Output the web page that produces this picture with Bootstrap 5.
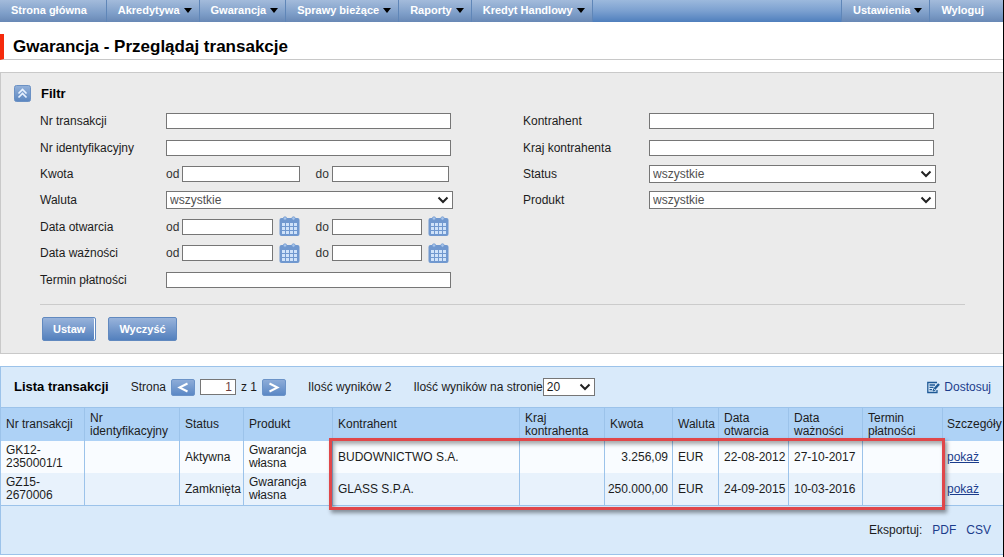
<!DOCTYPE html>
<html lang="pl">
<head>
<meta charset="utf-8">
<meta name="viewport" content="width=device-width, initial-scale=1">
<title>Gwarancja - Przeglądaj transakcje</title>
<link href="https://cdn.jsdelivr.net/npm/bootstrap@5.3.0/dist/css/bootstrap.min.css" rel="stylesheet">
<style>
body{font-family:"Liberation Sans",Arial,sans-serif;font-size:12px;line-height:14px;color:#1c1c1c;background:#fff;border-right:1px solid #000;min-height:100vh}
a{color:#1b3c8c;text-decoration:none}
input,select,button{font:inherit}
.topbar{height:22px;background:linear-gradient(#9cb9dd,#7ba0d0 50%,#4f7fbd);font-size:11px;font-weight:700}
.topbar .nav-link{height:22px;padding:0 7px 2px 11px;gap:4px;color:#fff;background:linear-gradient(#a3bbdb,#7f9fc9 60%,#6888b5);border-right:1px solid #5f86b8;white-space:nowrap}
.topbar .plain{padding-right:19px}
.topbar .first-right{border-left:1px solid #5f86b8}
.tri{width:8px;border:4px solid transparent;border-top:5px solid #000;border-bottom:0}
.page-title{margin-top:12px;height:26px;border-bottom:1px solid #c8c8c8;border-left:4px solid #f52a0c;padding-left:9px}
h1{font-size:17px;line-height:20px;font-weight:700;color:#000}
h2{font-size:13px;line-height:16px;font-weight:700;color:#000}
.filter-panel{margin-top:12px;background:#ebebeb;border:1px solid #c9c9c9;border-right:0;padding:12px 38px 12px 39px}
.filter-head{margin-left:-26px;gap:10px;height:17px}
.square{width:17px;height:17px;padding:0;border:0;background:none;display:flex}
.fields{margin-top:6px;padding-right:29px;column-gap:70px}
.form-side{flex:1 1 0;display:grid;grid-template-columns:126px minmax(0,1fr);grid-template-rows:repeat(7,1fr);min-height:185px;align-items:center}
.box{width:100%;height:16px;border:1px solid #767676;border-radius:0;padding:0 3px;background:#fff;min-width:0}
.pad-end{padding-right:2px}
.pair{padding-right:4px;gap:16px}
.half{flex:1 1 0;min-width:0}
.half label{flex:0 0 16px;color:#333}
.cal{flex:0 0 21px;margin-left:6px;padding:0;border:0;background:none;height:21px;display:flex}
.pick{width:100%;height:18px;border:1px solid #767676;border-radius:0;color:#505050;padding:0 18px 0 3px;line-height:14px;appearance:none;background:#fff url("data:image/svg+xml,%3Csvg xmlns='http://www.w3.org/2000/svg' width='12' height='8'%3E%3Cpath d='M1.500 1.500 6 6l4.500-4.500' fill='none' stroke='%23222' stroke-width='2'/%3E%3C/svg%3E") no-repeat right 3px center}
.rule{height:1px;margin-top:11px;background:#cbcbcb}
.actions{margin-top:12px;padding-left:2px;gap:12px}
.act{height:24px;padding:0 10px;border:1px solid #6189bf;border-radius:2px;background:linear-gradient(#98b3db,#5380bd);color:#fff;font-size:11px;font-weight:700}
.act.main-act{box-shadow:inset -1px 0 #fff}
.list-panel{margin-top:12px;background:#d9eafa;border:1px solid #9cc3ea;border-right:0}
.toolbar{height:40px;padding:0 12px 0 13px;gap:22px}
.pager{gap:5px}
.pg{width:24px;height:17px;padding:0;border:1px solid #6b93c8;border-radius:2px;background:linear-gradient(#8dacd8,#5b88c5);display:flex;align-items:center;justify-content:center}
.page-no{width:36px;height:16px;border:1px solid #767676;padding:0 3px;text-align:right;color:#6b3f3f}
.per-page{width:52px;color:#1c1c1c}
.list-table{table-layout:fixed;width:100%;margin:0;line-height:13px;color:#1c1c1c;border-collapse:separate;border-spacing:0}
.list-table th,.list-table td{padding:0 4px 0 5px;border-right:1px solid #9cc3ea;vertical-align:middle;font-weight:400}
.list-table td.amount{padding-left:0;text-align:right;white-space:nowrap}
.list-table th:last-child,.list-table td:last-child{border-right:0;padding:0 0 0 4px}
.list-table th{height:34px;background:#aed2f6;border-top:1px solid #9cc3ea}
.list-table td{height:32px;background:#f9fcff}
.list-table tbody tr+tr td{background:#e8f2fc;border-bottom:1px solid #9cc3ea;height:33px}
.list-table td a{text-decoration:underline}
.marker{position:absolute;left:328px;right:58px;top:31px;bottom:-4px;border:3px solid #e0474a;box-shadow:2px 3px 4px rgba(0,0,0,.4),inset 2px 3px 4px rgba(0,0,0,.35);pointer-events:none}
.exports{height:48px;padding:0 12px;gap:10px}
</style>
</head>
<body>
<svg class="d-none" xmlns="http://www.w3.org/2000/svg">
  <symbol id="calendar" viewBox="0 0 21 21">
    <rect x="0.500" y="2" width="20" height="18" rx="2" fill="#7098cf"/>
    <circle cx="6" cy="2.500" r="1.700" fill="#a9c6ec" stroke="#6f97ce" stroke-width=".8"/>
    <circle cx="14.500" cy="2.500" r="1.700" fill="#a9c6ec" stroke="#6f97ce" stroke-width=".8"/>
    <path d="M3 7h3v3H3zM7 7h3v3H7zM11 7h3v3h-3zM15 7h3v3h-3zM3 11h3v3H3zM7 11h3v3H7zM11 11h3v3h-3zM15 11h3v3h-3zM3 15h3v3H3zM7 15h3v3H7zM11 15h3v3h-3zM15 15h3v3h-3z" fill="#cfe2f9"/>
  </symbol>
</svg>

<nav class="topbar d-flex justify-content-between">
  <div class="d-flex">
    <a class="nav-link plain d-flex align-items-center" href="#">Strona główna</a>
    <a class="nav-link d-flex align-items-center" href="#">Akredytywa <span class="tri"></span></a>
    <a class="nav-link d-flex align-items-center" href="#">Gwarancja <span class="tri"></span></a>
    <a class="nav-link d-flex align-items-center" href="#">Sprawy bieżące <span class="tri"></span></a>
    <a class="nav-link d-flex align-items-center" href="#">Raporty <span class="tri"></span></a>
    <a class="nav-link d-flex align-items-center" href="#">Kredyt Handlowy <span class="tri"></span></a>
  </div>
  <div class="d-flex">
    <a class="nav-link first-right d-flex align-items-center" href="#">Ustawienia <span class="tri"></span></a>
    <a class="nav-link plain border-end-0 d-flex align-items-center" href="#">Wyloguj</a>
  </div>
</nav>

<header class="page-title d-flex align-items-center"><h1 class="m-0">Gwarancja - Przeglądaj transakcje</h1></header>

<main>
<form class="filter-panel">
  <div class="filter-head d-flex align-items-center">
    <button type="button" class="square" aria-label="Zwiń filtr"><svg width="17" height="17" viewBox="0 0 17 17"><defs><linearGradient id="sq" x2="0" y2="1"><stop stop-color="#94b2da"/><stop offset="1" stop-color="#5b86c0"/></linearGradient></defs><rect x=".5" y=".5" width="16" height="16" rx="2" fill="url(#sq)" stroke="#6b91c4"/><path d="M4.500 8.500l4-4 4 4M4.500 12.500l4-4 4 4" fill="none" stroke="#e8f2ff" stroke-width="1.700"/></svg></button>
    <h2 class="m-0">Filtr</h2>
  </div>
  <div class="fields d-flex">
    <div class="form-side">
      <label for="nr">Nr transakcji</label><div class="pad-end d-flex"><input id="nr" class="box" type="text"></div>
      <label for="ident">Nr identyfikacyjny</label><div class="pad-end d-flex"><input id="ident" class="box" type="text"></div>
      <span>Kwota</span>
      <div class="pair d-flex">
        <div class="half d-flex align-items-center"><label for="k1">od</label><input id="k1" class="box" type="text"></div>
        <div class="half d-flex align-items-center"><label for="k2">do</label><input id="k2" class="box" type="text"></div>
      </div>
      <label for="wal">Waluta</label><select id="wal" class="pick"><option>wszystkie</option></select>
      <span>Data otwarcia</span>
      <div class="pair d-flex">
        <div class="half d-flex align-items-center"><label for="o1">od</label><input id="o1" class="box" type="text"><button type="button" class="cal" aria-label="Kalendarz"><svg width="21" height="21"><use href="#calendar"/></svg></button></div>
        <div class="half d-flex align-items-center"><label for="o2">do</label><input id="o2" class="box" type="text"><button type="button" class="cal" aria-label="Kalendarz"><svg width="21" height="21"><use href="#calendar"/></svg></button></div>
      </div>
      <span>Data ważności</span>
      <div class="pair d-flex">
        <div class="half d-flex align-items-center"><label for="w1">od</label><input id="w1" class="box" type="text"><button type="button" class="cal" aria-label="Kalendarz"><svg width="21" height="21"><use href="#calendar"/></svg></button></div>
        <div class="half d-flex align-items-center"><label for="w2">do</label><input id="w2" class="box" type="text"><button type="button" class="cal" aria-label="Kalendarz"><svg width="21" height="21"><use href="#calendar"/></svg></button></div>
      </div>
      <label for="term">Termin płatności</label><div class="pad-end d-flex"><input id="term" class="box" type="text"></div>
    </div>
    <div class="form-side">
      <label for="kon">Kontrahent</label><div class="pad-end d-flex"><input id="kon" class="box" type="text"></div>
      <label for="kraj">Kraj kontrahenta</label><div class="pad-end d-flex"><input id="kraj" class="box" type="text"></div>
      <label for="stat">Status</label><select id="stat" class="pick"><option>wszystkie</option></select>
      <label for="prod">Produkt</label><select id="prod" class="pick"><option>wszystkie</option></select>
    </div>
  </div>
  <div class="rule"></div>
  <div class="actions d-flex">
    <button type="button" class="act main-act">Ustaw</button>
    <button type="button" class="act">Wyczyść</button>
  </div>
</form>

<section class="list-panel">
  <div class="toolbar d-flex align-items-center">
    <h2 class="m-0">Lista transakcji</h2>
    <div class="pager d-flex align-items-center">
      <label for="pageno">Strona</label>
      <button type="button" class="pg" aria-label="Poprzednia"><svg width="12" height="11"><path d="M10.500 1.500L2.500 5.500l8 4" fill="none" stroke="#fff" stroke-width="2"/></svg></button>
      <input id="pageno" class="page-no" type="text" value="1">
      <span>z 1</span>
      <button type="button" class="pg" aria-label="Następna"><svg width="12" height="11"><path d="M1.500 1.500l8 4-8 4" fill="none" stroke="#fff" stroke-width="2"/></svg></button>
    </div>
    <span>Ilość wyników 2</span>
    <div class="d-flex align-items-center">
      <label for="per">Ilość wyników na stronie</label>
      <select id="per" class="pick per-page"><option>20</option></select>
    </div>
    <a href="#" class="ms-auto d-flex align-items-center gap-1"><svg width="13" height="13" viewBox="0 0 13 13" fill="none" stroke="#1f5a96"><path d="M10 1.500H.8v10H10V9M2.500 4h5.500M2.500 6.300h4M2.500 8.600h2.500" stroke-width="1.300"/><path d="M12 3L7.500 8" stroke-width="2.400"/><path d="M6.800 7.500L6 10l2.500-1" stroke-width="1"/></svg>Dostosuj</a>
  </div>
  <div class="position-relative">
    <table class="list-table">
      <colgroup><col style="width:84px"><col style="width:95px"><col style="width:64px"><col style="width:89px"><col><col style="width:85px"><col style="width:68px"><col style="width:46px"><col style="width:70px"><col style="width:74px"><col style="width:80px"><col style="width:60px"></colgroup>
      <thead><tr><th>Nr transakcji</th><th>Nr identyfikacyjny</th><th>Status</th><th>Produkt</th><th>Kontrahent</th><th>Kraj kontrahenta</th><th>Kwota</th><th>Waluta</th><th>Data otwarcia</th><th>Data ważności</th><th>Termin płatności</th><th>Szczegóły</th></tr></thead>
      <tbody>
        <tr><td>GK12-2350001/1</td><td></td><td>Aktywna</td><td>Gwarancja własna</td><td>BUDOWNICTWO S.A.</td><td></td><td class="amount">3.256,09</td><td>EUR</td><td class="text-nowrap">22-08-2012</td><td class="text-nowrap">27-10-2017</td><td></td><td><a href="#">pokaż</a></td></tr>
        <tr><td>GZ15-2670006</td><td></td><td>Zamknięta</td><td>Gwarancja własna</td><td>GLASS S.P.A.</td><td></td><td class="amount">250.000,00</td><td>EUR</td><td class="text-nowrap">24-09-2015</td><td class="text-nowrap">10-03-2016</td><td></td><td><a href="#">pokaż</a></td></tr>
      </tbody>
    </table>
    <div class="marker"></div>
  </div>
  <div class="exports d-flex align-items-center justify-content-end"><span>Eksportuj:</span><a href="#">PDF</a><a href="#">CSV</a></div>
</section>
</main>
<script src="https://cdn.jsdelivr.net/npm/bootstrap@5.3.0/dist/js/bootstrap.bundle.min.js"></script>
</body>
</html>
